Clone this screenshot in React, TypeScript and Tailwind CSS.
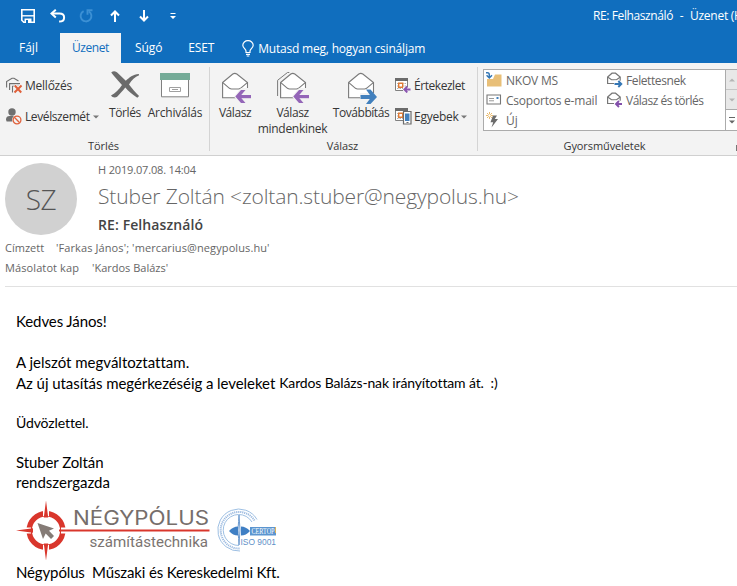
import type { ReactNode } from "react";

const BLUE = "#106ebe";
const GREY = "#6f6f6f";

function SaveIcon() {
  return (
    <svg className="shrink-0" width="14" height="14" viewBox="0 0 14 14" fill="none">
      <path d="M.8.8h12.4v12.4H2.8l-2-2z" stroke="#fff" strokeWidth="1.6" />
      <path d="M1 6.8h12" stroke="#fff" strokeWidth="1.4" />
      <path d="M3.5 9.5h7V14h-7z" fill="#fff" />
      <path d="M5 11h2v3H5z" fill={BLUE} />
    </svg>
  );
}

function UndoIcon() {
  return (
    <svg width="16" height="14" viewBox="0 0 16 14" fill="none" stroke="#fff" strokeWidth="2">
      <path d="M5.8.8 1.5 4.6l4.3 3.8" />
      <path d="M1.8 4.6h7.7c3 0 4.6 1.7 4.6 3.8 0 2.600-2 4.200-5 4.200" />
    </svg>
  );
}

function RedoIcon() {
  return (
    <svg width="14" height="14" viewBox="0 0 14 14" fill="none" stroke="#3c90d4" strokeWidth="1.9">
      <path d="M4.600 2.200A5.400 5.400 0 1 0 9.800 2.400" />
      <path d="M13.500 1.200H8.500v4.600" />
    </svg>
  );
}

function ArrowIcon({ down = false }: { down?: boolean }) {
  return (
    <svg width="10" height="12" viewBox="0 0 10 12" fill="none" stroke="#fff" strokeWidth="2" className={down ? "rotate-180" : ""}>
      <path d="M5 12V1.500M1 5.500l4-4 4 4" />
    </svg>
  );
}

function CustomizeIcon() {
  return (
    <svg width="6" height="8" viewBox="0 0 6 8" fill="#fff">
      <path d="M.5 1h5v1h-5zM0 4h6L3 7z" />
    </svg>
  );
}

function BulbIcon() {
  return (
    <svg width="12" height="17" viewBox="0 0 12 17" fill="none" stroke="#fff" strokeWidth="1.200">
      <path d="M4 12.500V11C4 9 .8 8 .8 5.200A5 4.600 0 0 1 6 .7a5 4.600 0 0 1 5.200 4.500C11.200 8 8 9 8 11v1.500zM4 14.300h4M4.700 16h2.600" />
    </svg>
  );
}

function IgnoreIcon() {
  return (
    <svg width="17" height="17" viewBox="0 0 17 17" fill="none">
      <path d="M.600 10.500V4.500L6 1.200h2l4.500 2.800M3.600 13V6.600H14M6.500 15.500V9.300H16" stroke={GREY} strokeWidth="1.100" />
      <path d="m8.500 8.500 6.700 7M15.500 8.500l-7 7" stroke="#f3f3f3" strokeWidth="4" />
      <path d="m8.800 8.500 6.400 7M15.500 8.500l-7 7" stroke="#e0603a" strokeWidth="2" />
    </svg>
  );
}

function JunkIcon() {
  return (
    <svg width="16" height="17" viewBox="0 0 16 17" fill="none">
      <circle cx="6" cy="4" r="3.700" fill={GREY} />
      <path d="M0 11.500C0 9 1.500 8 3.500 8h4.700c1.500 0 2.300.7 2.600 1.500L7 13.500H.6z" fill={GREY} />
      <circle cx="11" cy="12" r="5" fill="#f3f3f3" />
      <circle cx="11" cy="12" r="3.900" stroke="#e0603a" strokeWidth="1.300" />
      <path d="m8.300 9.300 5.400 5.400" stroke="#e0603a" strokeWidth="1.300" />
    </svg>
  );
}

function DeleteIcon() {
  return (
    <svg width="30" height="28" viewBox="0 0 30 28" fill="#6b6b6b">
      <path d="M1.200 1.500C4-.7 6.500.6 8.500 2.800l7.300 7C19.200 6.500 23 3.400 28.800 3l.3 1.300c-4.300 1.700-7.200 4.700-10.100 9.200 3.200 4.200 6.300 8 10.100 11.500l-1.800 1.700c-5-3-9-6.500-12-10.100-3 3.600-5.700 6.900-8.200 9.100-1.800 1.500-5 .8-6.100-1.200 4.500-2.700 8-5.800 11-10.500C8 9.800 4.200 5.300 1.200 1.500z" />
    </svg>
  );
}

function ArchiveIcon() {
  return (
    <svg width="30" height="25" viewBox="0 0 30 25" fill="none">
      <path d="M1.500 6.500h27v17.300h-27z" fill="#fff" stroke="#808080" />
      <path d="M0 0h30v7H0z" fill="#74ab98" />
      <path d="M9.500 14.500h11v4h-11z" stroke="#a0a0a0" />
      <path d="M12 16.500h6" stroke="#a0a0a0" />
    </svg>
  );
}

function Envelope({ variant }: { variant: "reply" | "all" | "forward" }) {
  const dx = variant === "all" ? 3 : 0;
  return (
    <svg width={variant === "all" ? 32 : 30} height="33" viewBox={variant === "all" ? "0 0 32 33" : "0 0 30 33"} fill="none">
      {variant === "all" && <path d="M.6 25V9.300L10.500 1.500h1.800" stroke="#7a7a7a" />}
      <g transform={`translate(${dx} 0)`}>
        <path d="M.6 11.500 10.800 3q2-1.300 4 0L25.500 11.500V26.700H.6z" fill="#fff" stroke="#7a7a7a" strokeWidth="1.100" />
        <path d="m.8 11.700 6.700 5.600q1 .7 2 .7h7q1 0 2-.7l6.800-5.600" stroke="#7a7a7a" strokeWidth="1.100" />
        {variant === "forward" ? (
          <g>
            <path d="M12 22h18v8H12z" fill="#f3f3f3" />
            <path d="M12.500 24H26v4H12.500z" fill="#4280bd" />
            <path d="M18 18.500h4.500l6.500 7.500-6.500 7H18l5.300-7z" fill="#4280bd" />
          </g>
        ) : (
          <g>
            <path d="m12 25.500 7-8.500h9v15H17z" fill="#f3f3f3" />
            <path d="M16 24h13v3.200H16z" fill="#9466b8" />
            <path d="M19 19h4.500l-5.500 6.500 5.500 6.500H19l-5.700-6.500z" fill="#9466b8" />
          </g>
        )}
      </g>
    </svg>
  );
}

function Calendar() {
  return (
    <g>
      <path d="M.5.500h12v12H.5z" fill="#fff" stroke="#808080" />
      <path d="M0 0h13v3H0z" fill="#6b6b6b" />
      <path d="M2 5.500h10M2 8h10M2 10.500h10" stroke="#b0b0b0" strokeDasharray="1.500 1" />
      <path d="M3.700 5.200h4v4h-4z" fill="#fff" stroke="#e07b35" strokeWidth="1.400" />
    </g>
  );
}

function MeetingIcon() {
  return (
    <svg width="16" height="15" viewBox="0 0 16 15" fill="none">
      <Calendar />
      <path d="M8 9h8v6H8z" fill="#f3f3f3" />
      <path d="M9 11.500h6.500M12.300 8.500l-3 3 3 3" stroke="#8a55b0" strokeWidth="1.800" />
    </svg>
  );
}

function MoreIcon() {
  return (
    <svg width="17" height="17" viewBox="0 0 17 17" fill="none">
      <Calendar />
      <path d="M8.500 3.500h7.500v12.500H8.500z" fill="#fff" stroke="#6b6b6b" strokeWidth="1.200" />
      <path d="M10 5.500h4.500v7.500H10z" fill="#4280bd" />
      <path d="M11.500 14.500h2" stroke="#6b6b6b" />
    </svg>
  );
}

function FolderIcon() {
  return (
    <svg width="16" height="16" viewBox="0 0 16 16" fill="none">
      <path d="M1 7h6l2-4.500h6.500v12H1z" fill="#e8bf78" />
      <path d="M0 .8h1.500Q3.300.8 3.300 3v2.500M.600 3.300l2.700 2.700L6 3.300" stroke="#3577b5" strokeWidth="1.500" />
    </svg>
  );
}

function CardIcon() {
  return (
    <svg width="16" height="12" viewBox="0 0 16 12" fill="none">
      <path d="M1 1h13.500v9H1z" fill="#fff" stroke="#777" strokeWidth="1.100" />
      <path d="M3 4.500h5M3 6.800h5" stroke="#999" />
      <path d="M10.500 3h2v2h-2z" fill="#4280bd" />
    </svg>
  );
}

function BoltIcon() {
  return (
    <svg width="16" height="16" viewBox="0 0 16 16" fill="none">
      <path d="M7 3.500h4L8.800 7H12l-6.500 8.500 1.700-5.300H4.500z" fill="#6b6b6b" />
      <path d="M3.500 0v7M0 3.500h7M1 1l5 5M6 1 1 6" stroke="#e6b25c" strokeWidth=".9" />
      <circle cx="3.500" cy="3.500" r="1.200" fill="#fff" />
    </svg>
  );
}

function MiniEnvelope({ forward = false }: { forward?: boolean }) {
  return (
    <svg width="16" height="16" viewBox="0 0 16 16" fill="none">
      <path d="M.6 11.500V5L5 1.200h3.500L13.200 5v6.500z" fill="#fff" stroke="#777" strokeWidth="1.200" />
      <path d="m1 5.300 3.500 2.500h5L13 5.300" stroke="#777" strokeWidth="1.100" />
      <path d="M7 8.700h8.500V16H7z" fill="#fff" />
      {forward ? (
        <path d="M7.500 12H14M11.300 9l3 3-3 3" stroke="#3577b5" strokeWidth="1.900" />
      ) : (
        <path d="M15 12H9M12 9l-3 3 3 3" stroke="#8350ab" strokeWidth="1.900" />
      )}
    </svg>
  );
}

function Caret({ className = "text-[#777]" }: { className?: string }) {
  return (
    <svg width="6" height="4" viewBox="0 0 6 4" fill="currentColor" className={className}>
      <path d="M0 .5h6l-3 3z" />
    </svg>
  );
}

function Tab({ children, className }: { children: ReactNode; className: string }) {
  return <div className={`h-[30px] whitespace-nowrap leading-[29px] ${className}`}>{children}</div>;
}

function BigButton({ icon, children, className }: { icon: ReactNode; children: ReactNode; className: string }) {
  return (
    <div className={`flex flex-col items-center ${className}`}>
      <div className="mb-px flex h-[41px] items-end justify-center">{icon}</div>
      <div className="text-center leading-4 whitespace-nowrap">{children}</div>
    </div>
  );
}

function SmallButton({ icon, iconWidth = "w-5", children }: { icon: ReactNode; iconWidth?: string; children: ReactNode }) {
  return (
    <div className="flex h-5 items-center whitespace-nowrap">
      <div className={`flex shrink-0 ${iconWidth}`}>{icon}</div>
      <div className="flex items-center pt-[2px] leading-5">{children}</div>
    </div>
  );
}

function QuickStep({ icon, iconWidth = "w-5", children }: { icon: ReactNode; iconWidth?: string; children: ReactNode }) {
  return (
    <div className="flex h-5 items-center whitespace-nowrap">
      <div className={`shrink-0 ${iconWidth}`}>{icon}</div>
      <div className="pt-[2px] leading-5">{children}</div>
    </div>
  );
}

function TitleBar() {
  return (
    <div className="flex h-8 items-center pl-[21px] text-xs text-white">
      <SaveIcon />
      <div className="ml-[15px] shrink-0"><UndoIcon /></div>
      <div className="ml-[13px] shrink-0"><RedoIcon /></div>
      <div className="ml-[17px] shrink-0"><ArrowIcon /></div>
      <div className="ml-[19px] shrink-0"><ArrowIcon down /></div>
      <div className="ml-[21px] shrink-0"><CustomizeIcon /></div>
      <div className="ml-[417px] flex shrink-0 whitespace-pre leading-8 tracking-[-0.4px]">
        <span>RE: Felhasználó</span>
        <span className="w-[17px] text-center">-</span>
        <span className="tracking-[-0.25px]">Üzenet (H</span>
      </div>
    </div>
  );
}

function Tabs() {
  return (
    <div className="flex h-[31px] items-end pt-px text-xs text-white">
      <Tab className="w-[60px] pl-[19px]">Fájl</Tab>
      <Tab className="w-[61px] bg-[#f3f3f3] pl-3 tracking-[-0.42px] text-[#106ebe]">Üzenet</Tab>
      <Tab className="pl-[14px] tracking-[-0.1px]">Súgó</Tab>
      <Tab className="pl-[26px] tracking-[-0.15px]">ESET</Tab>
      <Tab className="flex items-center pl-[28px] tracking-[-0.2px]">
        <span className="mr-1"><BulbIcon /></span>
        Mutasd meg, hogyan csináljam
      </Tab>
    </div>
  );
}

function Group({ label, className, children }: { label: string; className: string; children: ReactNode }) {
  return (
    <div className={`flex shrink-0 flex-col ${className}`}>
      <div className="flex h-[75px]">{children}</div>
      <div className="pr-[2px] text-center text-[11px] leading-[18px] tracking-[-0.1px]">{label}</div>
    </div>
  );
}

function Ribbon() {
  return (
    <div className="flex h-[93px] overflow-hidden border-b border-[#d0d0d0] bg-[#f3f3f3] text-xs text-[#363636]">
      <Group label="Törlés" className="w-[209px]">
        <div className="flex w-[104px] flex-col gap-[11px] pt-3 pl-[6px]">
          <SmallButton iconWidth="w-[19px]" icon={<IgnoreIcon />}><span className="tracking-[-0.24px]">Mellőzés</span></SmallButton>
          <SmallButton iconWidth="w-[19px]" icon={<JunkIcon />}>
            <span className="mr-[3px] tracking-[-0.4px]">Levélszemét</span>
            <Caret />
          </SmallButton>
        </div>
        <BigButton className="w-[42px]" icon={<div className="mb-[5px]"><DeleteIcon /></div>}>
          <span className="tracking-[-0.4px]">Törlés</span>
        </BigButton>
        <BigButton className="w-[58px]" icon={<div className="mb-[6px]"><ArchiveIcon /></div>}>
          <span className="tracking-[-0.2px]">Archiválás</span>
        </BigButton>
      </Group>
      <div className="mt-1 h-[84px] w-px shrink-0 bg-[#d4d4d4]" />
      <Group label="Válasz" className="w-[267px]">
        <BigButton className="ml-2 w-[34px]" icon={<div className="ml-1"><Envelope variant="reply" /></div>}>
          <span className="tracking-[-0.45px]">Válasz</span>
        </BigButton>
        <BigButton className="ml-[5px] w-[71px]" icon={<Envelope variant="all" />}>
          <span className="tracking-[-0.45px]">Válasz</span>
          <br />
          <span className="tracking-[-0.28px]">mindenkinek</span>
        </BigButton>
        <BigButton className="ml-[3px] w-[60px]" icon={<div className="ml-[3px]"><Envelope variant="forward" /></div>}>
          <span className="tracking-[-0.45px]">Továbbítás</span>
        </BigButton>
        <div className="flex flex-col gap-[11px] pt-3 pl-1">
          <SmallButton iconWidth="w-[19px]" icon={<MeetingIcon />}><span className="tracking-[-0.45px]">Értekezlet</span></SmallButton>
          <SmallButton iconWidth="w-[19px]" icon={<MoreIcon />}>
            <span className="mr-[2px] tracking-[-0.25px]">Egyebek</span>
            <Caret />
          </SmallButton>
        </div>
      </Group>
      <div className="mt-1 h-[84px] w-px shrink-0 bg-[#d4d4d4]" />
      <Group label="Gyorsműveletek" className="w-[255px]">
        <div className="mt-[6px] ml-[5px] flex h-[62px] w-[260px] shrink-0 border border-[#ababab] bg-white text-[#666]">
          <div className="w-[121px] pl-[2px]">
            <QuickStep icon={<FolderIcon />}><span className="tracking-[-0.2px]">NKOV MS</span></QuickStep>
            <QuickStep icon={<CardIcon />}><span className="tracking-[-0.22px]">Csoportos e-mail</span></QuickStep>
            <QuickStep icon={<BoltIcon />}>Új</QuickStep>
          </div>
          <div className="w-[120px] pl-[2px]">
            <QuickStep iconWidth="w-[19px]" icon={<MiniEnvelope forward />}><span className="tracking-[-0.4px]">Felettesnek</span></QuickStep>
            <QuickStep iconWidth="w-[19px]" icon={<MiniEnvelope />}><span className="tracking-[-0.5px]">Válasz és törlés</span></QuickStep>
          </div>
          <div className="flex flex-1 flex-col border-l border-[#ababab]">
            <div className="flex h-5 items-center border-b border-[#c6c6c6] bg-[#e8e8e8] pl-[3px] text-[#b5b5b5]">
              <Caret className="rotate-180" />
            </div>
            <div className="flex h-5 items-center border-b border-[#ababab] bg-[#e8e8e8] pl-[3px] text-[#b5b5b5]">
              <Caret className="" />
            </div>
            <div className="flex h-5 flex-col justify-center gap-[2px] pl-[3px] text-[#666]">
              <div className="h-px w-[6px] bg-[#666]" />
              <Caret className="" />
            </div>
          </div>
        </div>
      </Group>
      <div className="mt-[82px] ml-[3px] h-[6px] w-[6px] shrink-0 border-t border-l border-[#777]" />
    </div>
  );
}

function MessageHeader() {
  return (
    <div className="flex h-[131px] flex-col text-[11px] text-[#666]">
      <div className="flex h-[83px] pt-[7px] pl-[5px]">
        <div className="flex size-[72px] items-center justify-center rounded-full bg-[#d1d1d1] text-[28px] font-light tracking-[-0.5px] text-[#555]">
          SZ
        </div>
        <div className="ml-[21px] whitespace-nowrap">
          <div className="h-[15px] leading-[14px] tracking-[-0.16px]">H 2019.07.08. 14:04</div>
          <div className="h-9 text-[21px] leading-[36px] font-light tracking-[-0.12px]">
            Stuber Zoltán &lt;zoltan.stuber@negypolus.hu&gt;
          </div>
          <div className="pt-px text-[14px] leading-5 font-semibold tracking-[0.1px] text-[#444]">RE: Felhasználó</div>
        </div>
      </div>
      <div className="flex h-5 pl-[5px] leading-[18px]">
        <span className="w-[51px]">Címzett</span>
        <span className="tracking-[0.1px]">'Farkas János'; 'mercarius@negypolus.hu'</span>
      </div>
      <div className="flex h-5 pl-[5px] leading-[18px]">
        <span className="w-[87px] tracking-[0.1px]">Másolatot kap</span>
        <span>'Kardos Balázs'</span>
      </div>
      <div className="mt-[7px] ml-[5px] h-px bg-[#e1e1e1]" />
    </div>
  );
}

function CompanyLogo() {
  return (
    <svg width="196" height="62" viewBox="15 500 196 62" fill="none">
      <circle cx="46" cy="530.500" r="16.800" stroke="#d9362c" strokeWidth="5.400" />
      <path d="M43 501h6v15h-6zM43 545h6v15h-6zM16 527.500h15v6H16zM61 527.500h8v6h-8z" fill="#fff" />
      <path d="m46 500.500 2.200 17h-4.400zM46 560.500l2.200-17h-4.400zM16 530.500l17-2.200v4.400z" fill="#d9362c" />
      <path d="M59 529.500h150.500v2H59z" fill="#d9362c" />
      <path d="m37.500 523 16.500 5.500-5 2.200 5 5.300-3 3-5.300-5.400-2.700 5.400z" fill="#857b76" />
      <text x="73" y="525" textLength="136" lengthAdjust="spacingAndGlyphs" fontSize="19.500" fontFamily="Inter, sans-serif" fontWeight="400" fill="#766e6b">NÉGYPÓLUS</text>
      <text x="89.500" y="546.500" textLength="118.500" fontSize="15.500" fontFamily="Roboto, sans-serif" fill="#7b7471" lengthAdjust="spacingAndGlyphs">számítástechnika</text>
    </svg>
  );
}

function IsoBadge() {
  return (
    <svg width="70" height="46" viewBox="217 507 70 46" fill="none" className="overflow-visible">
      <path d="M257 519.500A21 21 0 1 0 240 551" stroke="#9dbfe3" strokeWidth="1" />
      <path d="M254.500 520.500A18.300 18.300 0 1 0 240 548.500" stroke="#9dbbe0" strokeWidth="2" strokeDasharray="1.200 .8" />
      <path d="M252 522A15.500 15.500 0 1 0 239 545.500" stroke="#9dbfe3" strokeWidth="1" />
      <path d="M239 515q-1 15-1 15t1 15q2-15 0-30z" stroke="#6d9bd0" />
      <path d="M229 531q4-4.500 9-4.500v9q-5 0-9-4.500zM250 531q-4-4.500-9-4.500v9q5 0 9-4.500z" fill="#3f7fc4" />
      <path d="M250 527h26v8.500h-26z" fill="#5b95d0" />
      <path d="M275 527h1v6h-1z" fill="#d9b55a" />
      <text x="251.500" y="534" textLength="23" lengthAdjust="spacingAndGlyphs" fontSize="7.500" fontFamily="Liberation Serif, serif" fill="#fff">CERTOP</text>
      <text x="240.500" y="544.800" textLength="35.500" lengthAdjust="spacingAndGlyphs" fontSize="9.500" fontFamily="Liberation Sans, sans-serif" fill="#5f91c8">ISO 9001</text>
    </svg>
  );
}

function MessageBody() {
  return (
    <div className="flex flex-col pt-6 pl-4 font-[Lato,sans-serif] text-[15px] leading-5 whitespace-pre text-black [font-variant-ligatures:none]">
      <p className="tracking-[-0.1px]">Kedves János!</p>
      <p className="mt-[21px]">A jelszót megváltoztattam.</p>
      <p className="mt-px flex tracking-[-0.06px]">
        Az új utasítás megérkezéséig a leveleket
        <span className="ml-1 text-[14px] tracking-[-0.14px]">Kardos Balázs-nak irányítottam át.  :)</span>
      </p>
      <p className="mt-5 text-[14px] tracking-[-0.1px]">Üdvözlettel.</p>
      <p className="mt-[19px] tracking-[-0.1px]">Stuber Zoltán</p>
      <p>rendszergazda</p>
      <div className="mt-2 -ml-px flex h-[62px] items-start gap-[6px]">
        <CompanyLogo />
        <div className="mt-[7px]"><IsoBadge /></div>
      </div>
      <p className="tracking-[-0.14px]">Négypólus  Műszaki és Kereskedelmi Kft.</p>
    </div>
  );
}

export default function App() {
  return (
    <div className="h-[586px] w-[737px] overflow-hidden bg-white font-['Open_Sans','Noto_Sans',sans-serif]">
      <div className="overflow-hidden bg-[#106ebe]">
        <TitleBar />
        <Tabs />
      </div>
      <Ribbon />
      <MessageHeader />
      <MessageBody />
    </div>
  );
}
